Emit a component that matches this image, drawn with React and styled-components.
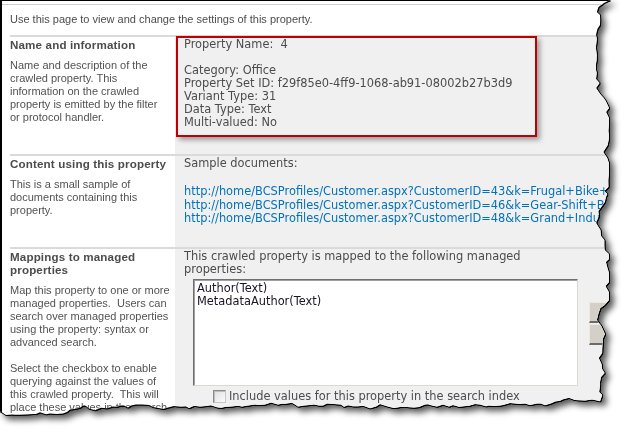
import React from "react";
import styled, { createGlobalStyle } from "styled-components";

const GlobalStyle = createGlobalStyle`
  html, body {
    margin: 0;
    padding: 0;
    background: #ffffff;
  }
  body {
    width: 629px;
    height: 435px;
    overflow: hidden;
  }
`;

const LABEL_FONT = `"Liberation Sans", Arial, sans-serif`;
const FIELD_FONT = `"DejaVu Sans", Verdana, sans-serif`;

// seeded random so the torn edge is the same on every render
const seeded = (seed) => {
  let s = seed;
  return () => {
    s = (s * 16807) % 2147483647;
    return (s - 1) / 2147483646;
  };
};

const buildTear = () => {
  const r = seeded(11);
  const pts = ["0px 0px", "610px 0px", "604px 3px"];
  let x = 603;
  for (let y = 7; y < 398; y += 3 + Math.floor(r() * 5)) {
    x += (r() - 0.5) * 9;
    x = Math.max(596, Math.min(609, x));
    pts.push(`${x.toFixed(1)}px ${y}px`);
  }
  let dy = 0;
  for (let xx = 600; xx > 0; xx -= 3 + Math.floor(r() * 5)) {
    dy += (r() - 0.5) * 5;
    dy = Math.max(-4, Math.min(4, dy));
    const base = 411 - xx * 0.018;
    pts.push(`${xx}px ${(base + dy).toFixed(1)}px`);
  }
  pts.push("0px 411px");
  return `polygon(${pts.join(", ")})`;
};

const TEAR = buildTear();

const Stage = styled.div`
  width: 629px;
  height: 435px;
  background: #ffffff;
  overflow: hidden;
`;

const Sheet = styled.div`
  width: 612px;
  height: 420px;
  filter: drop-shadow(1px 0 0 #000) drop-shadow(0 1px 0 #000)
    drop-shadow(4px 4px 3px rgba(0, 0, 0, 0.65));
`;

const Paper = styled.div`
  position: relative;
  box-sizing: border-box;
  width: 612px;
  height: 420px;
  background: #ffffff;
  border-top: 1px solid #000;
  border-left: 2px solid #000;
  clip-path: ${TEAR};
  overflow: hidden;
`;

const TopRule = styled.div`
  height: 1px;
  margin-top: 3px;
  background: #cfcfcf;
`;

const Intro = styled.div`
  padding: 8px 0 9px 8px;
  font-family: ${LABEL_FONT};
  font-size: 11px;
  line-height: 13px;
  color: #4c4c4c;
`;

const Section = styled.div`
  box-sizing: border-box;
  display: grid;
  grid-template-columns: 165px 1fr;
  margin-left: 8px;
  border-top: 2px solid #dadada;
  min-height: ${({ $h }) => $h}px;
`;

const Label = styled.div`
  padding: 1px 0 0 0;
  font-family: ${LABEL_FONT};
  font-size: 11px;
  line-height: 13px;
  color: #525252;
  white-space: pre;
`;

const LabelTitle = styled.div`
  font-weight: bold;
  font-size: 11.6px;
  letter-spacing: 0.15px;
  color: #4c4c4c;
  margin-bottom: 8px;
`;

const Field = styled.div`
  background: #f0f0f0;
  padding: 1px 0 0 9px;
  font-family: ${FIELD_FONT};
  font-size: 11.4px;
  line-height: 13px;
  color: #4c4c4c;
  white-space: nowrap;
  overflow: hidden;
`;

const Line = styled.div`
  min-height: 13px;
  white-space: pre;
`;

const Links = styled.div`
  margin-top: 2px;
`;

const DocLink = styled.a`
  display: block;
  color: #0072bc;
  text-decoration: none;
  line-height: 13.5px;
`;

const MapRow = styled.div`
  display: flex;
  align-items: flex-start;
  gap: 11px;
  margin: 3px 0 0 9px;
`;

const ListBox = styled.div`
  box-sizing: border-box;
  flex: none;
  width: 385px;
  height: 107px;
  padding: 2px 3px;
  background: #ffffff;
  border: 1px solid;
  border-color: #6f6f6f #dcd9d2 #dcd9d2 #6f6f6f;
  box-shadow: inset 1px 1px 0 #a0a0a0;
  color: #1a1424;
`;

const ButtonStack = styled.div`
  display: flex;
  flex-direction: column;
  gap: 1px;
  margin-top: 23px;
`;

const SideButton = styled.div`
  box-sizing: border-box;
  width: 26px;
  height: 21px;
  background: #d4d0c8;
  border-top: 1px solid #ece9e3;
  border-left: 1px solid #ece9e3;
  border-bottom: 2px solid #6a6a6a;
`;

const CheckRow = styled.label`
  display: flex;
  align-items: center;
  gap: 3px;
  margin: 4px 0 0 29px;
`;

const CheckBox = styled.span`
  box-sizing: border-box;
  display: inline-block;
  flex: none;
  width: 13px;
  height: 13px;
  border: 1px solid #8a8a8a;
  border-right-color: #c8c8c8;
  border-bottom-color: #c8c8c8;
  background: linear-gradient(135deg, #dedede 0%, #fbfbfb 100%);
  box-shadow: inset 1px 1px 0 #bdbdbd;
`;

const Callout = styled.div`
  position: absolute;
  left: 174px;
  top: 35px;
  box-sizing: border-box;
  width: 361px;
  height: 101px;
  border: 2px solid #c00000;
  box-shadow: 3px 3px 5px rgba(0, 0, 0, 0.35);
  pointer-events: none;
`;

const info = [
  "Property Name:  4",
  "",
  "Category: Office",
  "Property Set ID: f29f85e0-4ff9-1068-ab91-08002b27b3d9",
  "Variant Type: 31",
  "Data Type: Text",
  "Multi-valued: No",
];

const docs = [
  "http://home/BCSProfiles/Customer.aspx?CustomerID=43&k=Frugal+Bike+Store",
  "http://home/BCSProfiles/Customer.aspx?CustomerID=46&k=Gear-Shift+Bikes",
  "http://home/BCSProfiles/Customer.aspx?CustomerID=48&k=Grand+Industries",
];

const Lines = ({ items }) =>
  items.map((line, i) => <Line key={i}>{line}</Line>);

const App = () => (
  <Stage>
    <GlobalStyle />
    <Sheet>
      <Paper>
        <TopRule />
        <Intro>Use this page to view and change the settings of this property.</Intro>

        <Section $h={119}>
          <Label>
            <LabelTitle>Name and information</LabelTitle>
            <Lines
              items={[
                "Name and description of the",
                "crawled property. This",
                "information on the crawled",
                "property is emitted by the filter",
                "or protocol handler.",
              ]}
            />
          </Label>
          <Field>
            <Lines items={info} />
          </Field>
        </Section>

        <Section $h={93}>
          <Label>
            <LabelTitle>Content using this property</LabelTitle>
            <Lines
              items={[
                "This is a small sample of",
                "documents containing this",
                "property.",
              ]}
            />
          </Label>
          <Field>
            <Line>Sample documents:</Line>
            <Line />
            <Links>
              {docs.map((d) => (
                <DocLink key={d} href="#">
                  {d}
                </DocLink>
              ))}
            </Links>
          </Field>
        </Section>

        <Section $h={180}>
          <Label>
            <LabelTitle>
              Mappings to managed
              <br />
              properties
            </LabelTitle>
            <Lines
              items={[
                "Map this property to one or more",
                "managed properties.  Users can",
                "search over managed properties",
                "using the property: syntax or",
                "advanced search.",
                "",
                "Select the checkbox to enable",
                "querying against the values of",
                "this crawled property.  This will",
                "place these values in the search",
                "index.",
              ]}
            />
          </Label>
          <Field>
            <Lines
              items={[
                "This crawled property is mapped to the following managed",
                "properties:",
              ]}
            />
            <MapRow>
              <ListBox>
                <Line>Author(Text)</Line>
                <Line>MetadataAuthor(Text)</Line>
              </ListBox>
              <ButtonStack>
                <SideButton />
                <SideButton />
              </ButtonStack>
            </MapRow>
            <CheckRow>
              <CheckBox />
              <span>Include values for this property in the search index</span>
            </CheckRow>
          </Field>
        </Section>

        <Callout />
      </Paper>
    </Sheet>
  </Stage>
);

export default App;
